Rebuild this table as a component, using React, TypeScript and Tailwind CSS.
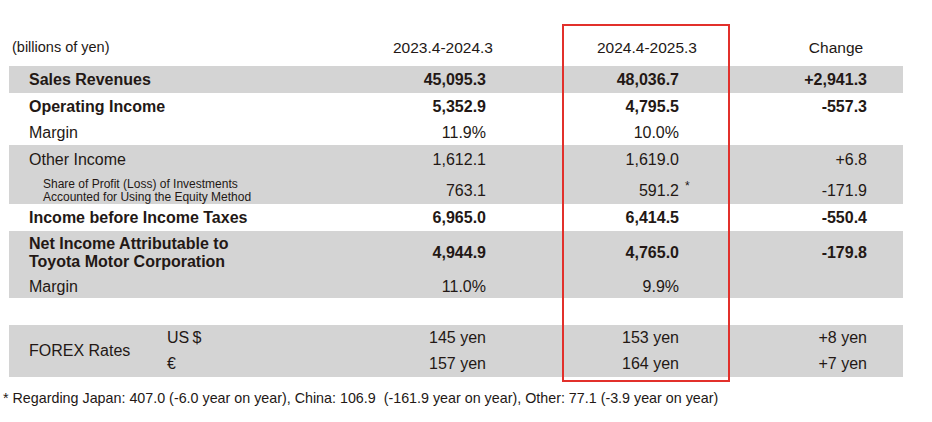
import React from "react";

type Row = {
  label: React.ReactNode;
  a: string;
  b: string;
  c?: string;
  bold?: boolean;
  gray?: boolean;
  h: string;
  star?: boolean;
  small?: boolean;
};

const rows: Row[] = [
  { label: "Sales Revenues", a: "45,095.3", b: "48,036.7", c: "+2,941.3", bold: true, gray: true, h: "h-[27px]" },
  { label: "Operating Income", a: "5,352.9", b: "4,795.5", c: "-557.3", bold: true, h: "h-[27px]" },
  { label: "Margin", a: "11.9%", b: "10.0%", h: "h-[25px]" },
  { label: "Other Income", a: "1,612.1", b: "1,619.0", c: "+6.8", gray: true, h: "h-[30px]" },
  {
    label: (
      <>
        Share of Profit (Loss) of Investments
        <br />
        Accounted for Using the Equity Method
      </>
    ),
    a: "763.1",
    b: "591.2",
    c: "-171.9",
    gray: true,
    small: true,
    star: true,
    h: "h-[29px] pt-[3px]",
  },
  { label: "Income before Income Taxes", a: "6,965.0", b: "6,414.5", c: "-550.4", bold: true, h: "h-[27px]" },
  {
    label: (
      <>
        Net Income Attributable to
        <br />
        Toyota Motor Corporation
      </>
    ),
    a: "4,944.9",
    b: "4,765.0",
    c: "-179.8",
    bold: true,
    gray: true,
    h: "h-[44px]",
  },
  { label: "Margin", a: "11.0%", b: "9.9%", gray: true, h: "h-[23px]" },
];

const forex = [
  { cur: "US\u2009$", a: "145 yen", b: "153 yen", c: "+8 yen" },
  { cur: "€", a: "157 yen", b: "164 yen", c: "+7 yen" },
];

export default function App() {
  return (
    <div className="relative w-[932px] h-[422px] bg-white text-[#231815] font-['Liberation_Sans',Arial,sans-serif] overflow-hidden">
      {/* header */}
      <div className="flex items-center h-[36px] mt-[30px] ml-[9px] text-[15.5px]">
        <div className="w-[334px] pl-[3px] text-[14.5px]">(billions of yen)</div>
        <div className="w-[200px] text-center">2023.4-2024.3</div>
        <div className="w-[208px] text-center">2024.4-2025.3</div>
        <div className="w-[170px] text-center">Change</div>
      </div>

      <div className="ml-[9px] w-[894px] text-[16px]">
        {rows.map((r, i) => (
          <div
            key={i}
            className={`flex items-center ${r.h} ${r.gray ? "bg-[#d4d4d4]" : "bg-white"} ${
              r.bold ? "font-bold" : ""
            }`}
          >
            <div
              className={
                r.small
                  ? "w-[300px] pl-[34px] text-[12px] leading-[13px] font-normal"
                  : "w-[300px] pl-[20px] leading-[18px]"
              }
            >
              {r.label}
            </div>
            <div className="w-[177px] text-right">{r.a}</div>
            <div className="w-[193px] text-right">
              <span className="relative">
                {r.b}
                {r.star && (
                  <span className="absolute left-full ml-[6px] top-[-5px] text-[12px]">*</span>
                )}
              </span>
            </div>
            <div className="w-[188px] text-right">{r.c}</div>
          </div>
        ))}

        <div className="h-[27px]" />

        <div className="flex bg-[#d4d4d4] h-[52px]">
          <div className="w-[300px] flex">
            <div className="w-[158px] pl-[20px] flex items-center">FOREX Rates</div>
            <div className="flex flex-col">
              {forex.map((f) => (
                <div key={f.cur} className="h-[26px] flex items-center">
                  {f.cur}
                </div>
              ))}
            </div>
          </div>
          <div className="w-[177px] flex flex-col">
            {forex.map((f) => (
              <div key={f.a} className="h-[26px] flex items-center justify-end">
                {f.a}
              </div>
            ))}
          </div>
          <div className="w-[193px] flex flex-col">
            {forex.map((f) => (
              <div key={f.b} className="h-[26px] flex items-center justify-end">
                {f.b}
              </div>
            ))}
          </div>
          <div className="w-[188px] flex flex-col">
            {forex.map((f) => (
              <div key={f.c} className="h-[26px] flex items-center justify-end">
                {f.c}
              </div>
            ))}
          </div>
        </div>
      </div>

      <p className="mt-[13px] ml-[3px] text-[14.3px] leading-[16px]">
        * Regarding Japan: 407.0 (-6.0 year on year), China: 106.9&nbsp; (-161.9 year on year), Other: 77.1 (-3.9 year on year)
      </p>

      {/* highlight box over current year column */}
      <div className="absolute left-[562px] top-[24px] w-[168px] h-[358px] border-2 border-[#e2302b] pointer-events-none" />
    </div>
  );
}
